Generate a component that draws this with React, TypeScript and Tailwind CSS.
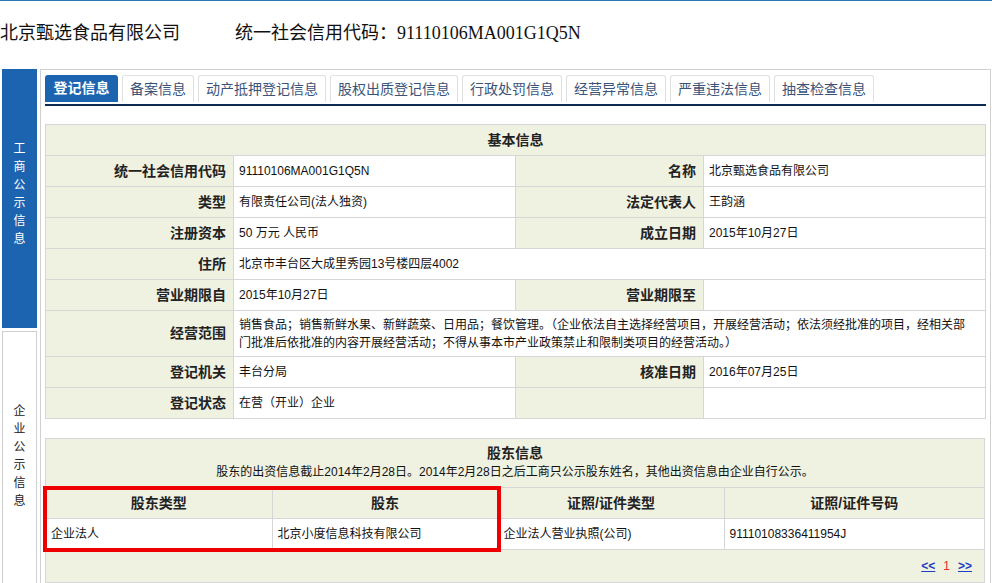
import React from "react";

const tabs = [
  "登记信息",
  "备案信息",
  "动产抵押登记信息",
  "股权出质登记信息",
  "行政处罚信息",
  "经营异常信息",
  "严重违法信息",
  "抽查检查信息",
];

const sans = "font-['Liberation_Sans','Noto_Sans_CJK_SC',sans-serif]";
const serif = "font-['Liberation_Serif','Noto_Sans_CJK_SC',serif]";

function Label({ children }: { children?: React.ReactNode }) {
  return (
    <td className="bg-[#eff1e1] border border-[#d6d6d6] text-right pr-[7px] text-[14px] font-bold text-[#222] whitespace-nowrap">
      {children}
    </td>
  );
}

function Value({ children, span }: { children?: React.ReactNode; span?: number }) {
  return (
    <td colSpan={span} className="bg-white border border-[#d6d6d6] pl-[5px] pr-[14px] text-[12px] text-[#111] leading-[18px]">
      {children}
    </td>
  );
}

export default function App() {
  return (
    <div className={`w-[992px] h-[583px] overflow-hidden bg-white ${sans}`}>
      <div className="h-px bg-[#2b78b6]" />

      {/* Title */}
      <div className={`h-[68px] flex items-start pt-[19px] text-[18px] text-[#111] ${serif}`}>
        <span>北京甄选食品有限公司</span>
        <span className="ml-[55px]">统一社会信用代码：91110106MA001G1Q5N</span>
      </div>

      <div className="flex">
        {/* Left side menu */}
        <div className="w-[35px] ml-[2px] flex flex-col gap-[3px]">
          <div className="h-[259px] bg-[#1c64b0] flex flex-col items-center pt-[71px] text-white text-[12px] leading-[18px]">
            {"工商公示信息".split("").map((c, i) => (
              <span key={i}>{c}</span>
            ))}
          </div>
          <div className="h-[260px] bg-white border border-[#cfcfcf] flex flex-col items-center pt-[70px] text-[#222] text-[12px] leading-[18px]">
            {"企业公示信息".split("").map((c, i) => (
              <span key={i}>{c}</span>
            ))}
          </div>
        </div>

        {/* Main panel */}
        <div className="ml-[3px] w-[951px] h-[520px] border border-[#d0d0d0] border-b-0 px-[4px] pt-[5px]">
          <div className="flex gap-[4px] h-[27px]">
            {tabs.map((t, i) =>
              i === 0 ? (
                <div key={t} className="w-[73px] justify-center flex items-center bg-[#1c64b0] text-white font-bold text-[14px] rounded-t-[3px]">
                  {t}
                </div>
              ) : (
                <div key={t} className="px-[7px] flex items-center bg-white border border-[#e0e0e0] border-b-0 text-[#3a5378] text-[14px] rounded-t-[3px]">
                  {t}
                </div>
              )
            )}
          </div>
          <div className="mt-[2px] h-[2px] bg-[#0c2b55]" />

          {/* Basic info */}
          <table className="mt-[18px] w-[940px] border-collapse table-fixed">
            <colgroup>
              <col className="w-[188px]" />
              <col className="w-[282px]" />
              <col className="w-[188px]" />
              <col className="w-[282px]" />
            </colgroup>
            <tbody>
              <tr className="h-[31px]">
                <td colSpan={4} className="bg-[#eff1e1] border border-[#d6d6d6] text-center text-[14px] font-bold text-[#222]">
                  基本信息
                </td>
              </tr>
              <tr className="h-[31px]">
                <Label>统一社会信用代码</Label>
                <Value>91110106MA001G1Q5N</Value>
                <Label>名称</Label>
                <Value>北京甄选食品有限公司</Value>
              </tr>
              <tr className="h-[31px]">
                <Label>类型</Label>
                <Value>有限责任公司(法人独资)</Value>
                <Label>法定代表人</Label>
                <Value>王韵涵</Value>
              </tr>
              <tr className="h-[31px]">
                <Label>注册资本</Label>
                <Value>50 万元 人民币</Value>
                <Label>成立日期</Label>
                <Value>2015年10月27日</Value>
              </tr>
              <tr className="h-[31px]">
                <Label>住所</Label>
                <Value span={3}>北京市丰台区大成里秀园13号楼四层4002</Value>
              </tr>
              <tr className="h-[31px]">
                <Label>营业期限自</Label>
                <Value>2015年10月27日</Value>
                <Label>营业期限至</Label>
                <Value />
              </tr>
              <tr className="h-[46px]">
                <Label>经营范围</Label>
                <Value span={3}>
                  销售食品；销售新鲜水果、新鲜蔬菜、日用品；餐饮管理。（企业依法自主选择经营项目，开展经营活动；依法须经批准的项目，经相关部门批准后依批准的内容开展经营活动；不得从事本市产业政策禁止和限制类项目的经营活动。）
                </Value>
              </tr>
              <tr className="h-[31px]">
                <Label>登记机关</Label>
                <Value>丰台分局</Value>
                <Label>核准日期</Label>
                <Value>2016年07月25日</Value>
              </tr>
              <tr className="h-[31px]">
                <Label>登记状态</Label>
                <Value>在营（开业）企业</Value>
                <Label />
                <Value />
              </tr>
            </tbody>
          </table>

          {/* Shareholders */}
          <div className="relative mt-[19px] w-[940px] bg-[#eff1e1] border border-[#d6d6d6]">
            <div className="h-[48px] flex flex-col items-center pt-[4px]">
              <div className="text-[14px] font-bold text-[#222] leading-[20px]">股东信息</div>
              <div className="text-[12px] text-[#111] leading-[18px]">
                股东的出资信息截止2014年2月28日。2014年2月28日之后工商只公示股东姓名，其他出资信息由企业自行公示。
              </div>
            </div>
            <table className="w-full border-collapse table-fixed">
              <colgroup>
                <col className="w-[226px]" />
                <col className="w-[226px]" />
                <col className="w-[226px]" />
                <col />
              </colgroup>
              <tbody>
                <tr className="h-[31px]">
                  {["股东类型", "股东", "证照/证件类型", "证照/证件号码"].map((h) => (
                    <td key={h} className="border border-[#d6d6d6] border-l-0 last:border-r-0 text-center text-[14px] font-bold text-[#222]">
                      {h}
                    </td>
                  ))}
                </tr>
                <tr className="h-[31px] bg-white">
                  {["企业法人", "北京小度信息科技有限公司", "企业法人营业执照(公司)", "91110108336411954J"].map((v) => (
                    <td key={v} className="border border-[#d6d6d6] border-l-0 last:border-r-0 pl-[5px] text-[12px] text-[#111]">
                      {v}
                    </td>
                  ))}
                </tr>
              </tbody>
            </table>
            <div className="h-[32px] flex items-center justify-end pr-[12px] gap-[8px] text-[12px]">
              <span className="text-[#1a3fc0] underline font-bold">&lt;&lt;</span>
              <span className="text-[#e03030]">1</span>
              <span className="text-[#1a3fc0] underline font-bold">&gt;&gt;</span>
            </div>

            {/* highlight annotation */}
            <div className="absolute left-[-3px] top-[47px] w-[458px] h-[66px] border-[4px] border-[#ee0000]" />
          </div>
        </div>
      </div>
    </div>
  );
}
